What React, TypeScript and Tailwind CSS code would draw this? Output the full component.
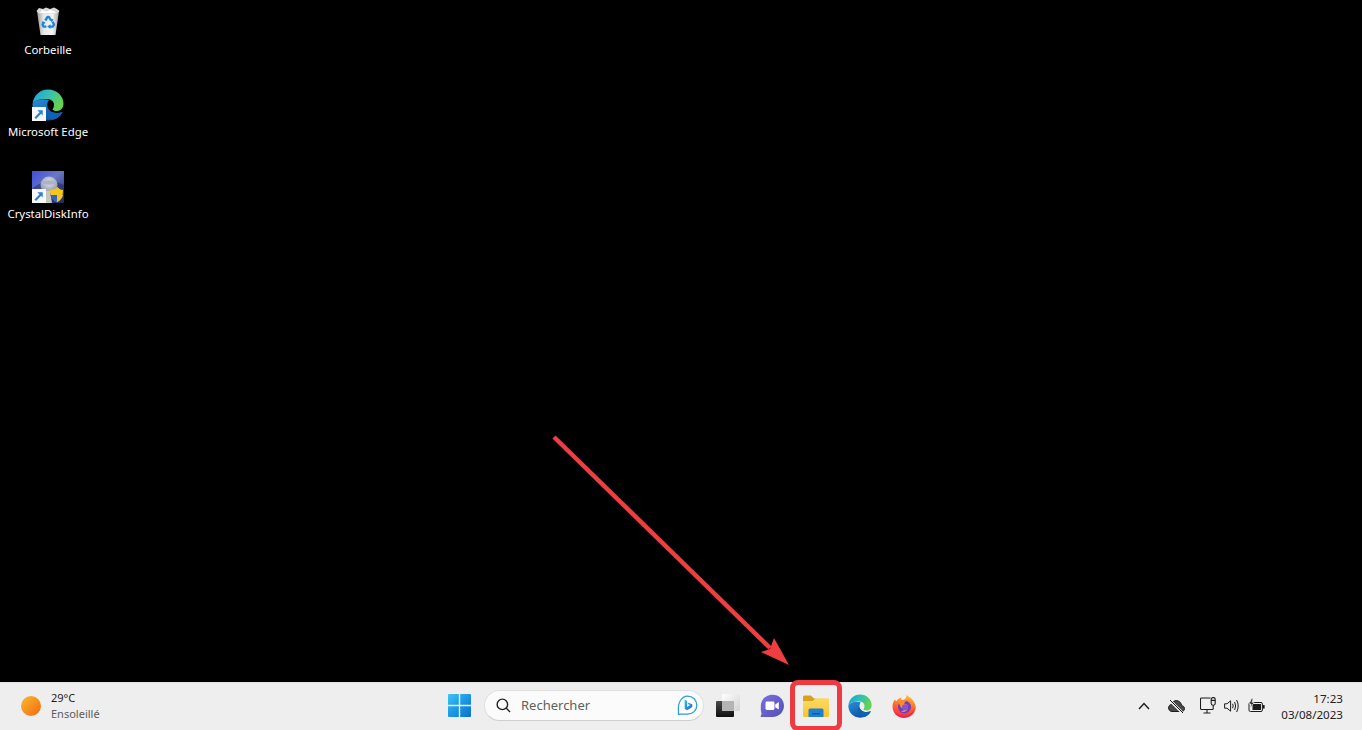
import React from "react";

function Shortcut() {
  return (
    <svg viewBox="0 0 13 13" className="absolute left-0 bottom-0 w-[14px] h-[14px]">
      <rect width="13" height="13" fill="#f8f8f8" />
      <path d="M3 10.5 L8.2 5.2" stroke="#2a7fd8" strokeWidth="2" fill="none" />
      <path d="M5 3 H10 V8 Z" fill="#2a7fd8" />
    </svg>
  );
}

function EdgeIcon({ size, id }: { size: number; id: string }) {
  return (
    <svg viewBox="0 0 32 32" width={size} height={size}>
      <defs>
        <linearGradient id={`${id}a`} x1="0" y1="0" x2="1" y2="0.4">
          <stop offset="0" stopColor="#1b9de2" />
          <stop offset="0.55" stopColor="#35c1b0" />
          <stop offset="1" stopColor="#66d24f" />
        </linearGradient>
        <linearGradient id={`${id}b`} x1="0" y1="0" x2="0.7" y2="1">
          <stop offset="0" stopColor="#2b8fd8" />
          <stop offset="1" stopColor="#0b4f9e" />
        </linearGradient>
      </defs>
      <path d="M0.5 15 C1.5 6 8 0.5 16 0.5 C25 0.5 31.5 7 31.5 15 C31.5 19.5 28 22 24.5 22 C22.5 22 21 21.2 20.5 20.4 C21.6 19 22 17.6 22 15.5 C22 12 18.5 10 14 10 C8 10 3 11 0.5 15 Z" fill={`url(#${id}a)`} />
      <path d="M0.5 15 C3 11 9 9 17 11 C15.5 12.5 15 15 15.5 18 C16.5 23 23 25.5 30.5 23 C28 28.5 22 31.5 16 31.5 C7 31.5 0 24 0.5 15 Z" fill={`url(#${id}b)`} />
      <path d="M15.5 18 C16.5 23 23 25.5 30.5 23 C28.5 27.5 24.5 30.2 21 30.5 C17 29.5 13 25 13.5 20 C13.7 18.5 14.5 17.5 15.5 18 Z" fill="#0f62b5" />
    </svg>
  );
}

function RecycleBin() {
  return (
    <svg viewBox="0 0 24 29" className="w-[24px] h-[29px] mb-[3px]">
      <defs>
        <linearGradient id="bin" x1="0" y1="0" x2="1" y2="0">
          <stop offset="0" stopColor="#9a9a9a" />
          <stop offset="0.3" stopColor="#e8e8e8" />
          <stop offset="0.7" stopColor="#f4f4f4" />
          <stop offset="1" stopColor="#a4a4a4" />
        </linearGradient>
      </defs>
      <path d="M1 4 L23 4 L19.5 28 L4.5 28 Z" fill="url(#bin)" />
      <path d="M0.5 4 L3 1 L7 2 L10 0.5 L14 2 L18 0.5 L21 2 L23.5 4 L21 6.5 L3 6.5 Z" fill="#d8d8d8" />
      <path d="M4 6 L6 3 L10 4.5 L14 3 L18 4 L20 6 Z" fill="#ffffff" />
      <g fill="none" stroke="#1d86e0" strokeWidth="2.4" strokeLinejoin="round">
        <path d="M9.3 13.5 L11.5 10 H13 L15 13.3" />
        <path d="M16.6 14.8 L18 17.8 L16.8 19.6 H13.8" />
        <path d="M10.4 19.6 H7.6 L6.6 17.6 L8 15" />
      </g>
      <path d="M13.5 12.3 L17.5 12 L16 15.5 Z M14.5 17.2 V22 L11.2 19.6 Z M5.8 14.2 L9.6 15.6 L6.6 17.8 Z" fill="#1d86e0" />
    </svg>
  );
}

function CrystalIcon() {
  return (
    <svg viewBox="0 0 32 32" className="w-[32px] h-[32px]">
      <defs>
        <linearGradient id="cbg" x1="0" y1="0" x2="1" y2="1">
          <stop offset="0" stopColor="#3f4fd8" />
          <stop offset="0.45" stopColor="#6a78c8" />
          <stop offset="1" stopColor="#1d2a6a" />
        </linearGradient>
        <radialGradient id="csph" cx="0.5" cy="0.35" r="0.7">
          <stop offset="0" stopColor="#e4e6ee" />
          <stop offset="1" stopColor="#7f88a4" />
        </radialGradient>
      </defs>
      <rect width="32" height="32" fill="url(#cbg)" />
      <path d="M0 18 C8 10 20 8 32 14 V32 H0 Z" fill="#1e2a5e" opacity="0.55" />
      <circle cx="17" cy="14" r="8.5" fill="url(#csph)" />
      <ellipse cx="17" cy="11.5" rx="6.5" ry="2.2" fill="#aeb3c4" />
      <path d="M8 24 C8 20 13 19 18 20 L20 32 H8 Z" fill="#c9c6c0" />
      <path d="M18 19 C21 19 24 18 25.5 16 C27 18 29 19 31 19 C31 25 29 29 25 31 C21 29 18 25 18 19 Z" fill="#f6c61a" />
      <path d="M25 17 V24 H18.5 C19 27 21.5 29.6 25 31 Z" fill="#2a66c8" />
      <path d="M25 24 H31 C30.4 27 28.5 29.6 25 31 Z" fill="#f6c61a" />
    </svg>
  );
}

function DesktopIcon({ label, children }: { label: string; children: React.ReactNode }) {
  return (
    <div className="w-[96px] h-[82px] flex flex-col items-center">
      <div className="relative w-[32px] h-[36px] flex items-end justify-center">{children}</div>
      <div className="mt-[3px] text-[11.4px] leading-[16px] text-white whitespace-nowrap">{label}</div>
    </div>
  );
}

function WindowsLogo() {
  return (
    <svg viewBox="0 0 23 23" className="w-[23px] h-[23px]">
      <defs>
        <linearGradient id="win" gradientUnits="userSpaceOnUse" x1="0" y1="0" x2="23" y2="23">
          <stop offset="0" stopColor="#3fc3f7" />
          <stop offset="0.5" stopColor="#1a98e6" />
          <stop offset="1" stopColor="#0b6fc9" />
        </linearGradient>
      </defs>
      <path d="M1 0 H10.8 V10.8 H0 V1 Q0 0 1 0 Z M12.2 0 H22 Q23 0 23 1 V10.8 H12.2 Z M0 12.2 H10.8 V23 H1 Q0 23 0 22 Z M12.2 12.2 H23 V22 Q23 23 22 23 H12.2 Z" fill="url(#win)" />
    </svg>
  );
}

function BingIcon() {
  return (
    <svg viewBox="0 0 22 22" className="w-[21px] h-[21px]">
      <defs>
        <linearGradient id="bing" x1="0" y1="0" x2="1" y2="1">
          <stop offset="0" stopColor="#30c4e8" />
          <stop offset="1" stopColor="#1a5fd8" />
        </linearGradient>
      </defs>
      <path d="M11 1.2 C16.5 1.2 20.8 5.4 20.8 10.8 C20.8 16.2 16.5 20 11 20 H3.2 C2 20 1.6 21 1.4 20 C1.8 18.5 1.6 17.5 1.4 15.5 C0.6 10 4 1.2 11 1.2 Z" fill="#fff" stroke="#2a9ce0" strokeWidth="1.3" />
      <path d="M8 5 L10.6 6 V12.6 L14 10.6 L11.8 9.6 L11 7.8 L16 9.6 V12.6 L10.6 16 L8 14.4 Z" fill="url(#bing)" />
    </svg>
  );
}

function TaskView() {
  return (
    <svg viewBox="0 0 24 23" className="w-[24px] h-[23px]">
      <defs>
        <linearGradient id="tvd" x1="0" y1="0" x2="0" y2="1">
          <stop offset="0" stopColor="#4a4a4a" />
          <stop offset="1" stopColor="#0f0f0f" />
        </linearGradient>
        <linearGradient id="tvl" x1="0" y1="0" x2="1" y2="1">
          <stop offset="0" stopColor="#ffffff" />
          <stop offset="1" stopColor="#d2d2d2" />
        </linearGradient>
      </defs>
      <rect x="0" y="7" width="18" height="16" rx="1" fill="url(#tvd)" />
      <rect x="6" y="0" width="18" height="17" rx="1" fill="url(#tvl)" />
      <rect x="6" y="7" width="12" height="10" fill="#b4b4b4" />
    </svg>
  );
}

function TeamsIcon() {
  return (
    <svg viewBox="0 0 24 24" className="w-[24px] h-[24px]">
      <defs>
        <linearGradient id="tm" x1="0" y1="0" x2="1" y2="1">
          <stop offset="0" stopColor="#7b6fe0" />
          <stop offset="1" stopColor="#4f52b2" />
        </linearGradient>
      </defs>
      <path d="M12.5 0.8 C19 0.8 24 5.6 24 11.8 C24 18 19 23 12.5 23 H1.2 C0.4 23 0.4 22.4 0.8 21.8 C1.6 20.6 1.6 19.6 1.2 18 C0.6 16 0.8 14 0.8 11.8 C0.8 5.6 6 0.8 12.5 0.8 Z" fill="url(#tm)" />
      <rect x="5.5" y="7.5" width="9" height="8.5" rx="1.4" fill="#fff" />
      <path d="M15.2 10.4 L18.8 8 V15.5 L15.2 13.2 Z" fill="#fff" />
    </svg>
  );
}

function FolderIcon() {
  return (
    <svg viewBox="0 0 26 22" className="w-[26px] h-[22px]">
      <defs>
        <linearGradient id="fd" x1="0" y1="0" x2="0" y2="1">
          <stop offset="0" stopColor="#fcd964" />
          <stop offset="1" stopColor="#f9c52f" />
        </linearGradient>
      </defs>
      <path d="M0 2 Q0 0.5 1.5 0.5 H8 L11 3.5 H13 L10 6 H0 Z" fill="#d9a21e" />
      <path d="M0 6 H10 L13 3.3 H24.5 Q26 3.3 26 4.8 V20.5 Q26 22 24.5 22 H1.5 Q0 22 0 20.5 Z" fill="url(#fd)" />
      <path d="M5.5 15 Q5.5 13.5 7 13.5 H19 Q20.5 13.5 20.5 15 V22 H5.5 Z" fill="#1f7fd0" />
      <rect x="9" y="18" width="8" height="1.4" fill="#0f5aa8" />
    </svg>
  );
}

function FirefoxIcon() {
  return (
    <svg viewBox="0 0 24 24" className="w-[24px] h-[24px]">
      <defs>
        <linearGradient id="ff" x1="0.6" y1="0" x2="0.4" y2="1">
          <stop offset="0" stopColor="#ffc02e" />
          <stop offset="0.5" stopColor="#ff6b2b" />
          <stop offset="1" stopColor="#f2264f" />
        </linearGradient>
      </defs>
      <path d="M14.5 0.5 C15.5 2.5 19 3.5 21 6.5 C23.5 10 24 13 23.5 15 C22.5 20.5 17.5 24 12 24 C5.5 24 0.5 19 0.5 12.5 C0.5 9.5 1.5 7 3 5.5 C3.5 6.5 4 7 4.5 7.3 C5.5 5 7.5 3.8 9.5 3.5 C8.8 4.5 9 5.5 9.5 6 C12 6.5 15 4 14.5 0.5 Z" fill="url(#ff)" />
      <circle cx="12.5" cy="13" r="6.5" fill="#6b3fc4" />
      <path d="M7 8 C9 6 13 5.5 15 7 C13 7.5 12 8.5 12.5 10 C15 10 16.5 11.5 16 14 C15.5 17 12 19 9 17.5 C11 17.2 12.5 16 12.5 14.5 C10 15 7.5 13 7 8 Z" fill="#ff8a2b" />
      <circle cx="13" cy="13.2" r="3" fill="#8a4fd8" />
      <path d="M2 16 C4 20.5 9 22.5 13 22 C18 21.5 21.5 18 22.5 13.5 C22.5 19 18 23.3 12 23.3 C7.5 23.3 3.5 20.5 2 16 Z" fill="#e8214d" />
    </svg>
  );
}

function TaskIcon({ children }: { children: React.ReactNode }) {
  return <div className="relative w-[44px] h-[44px] flex items-center justify-center shrink-0">{children}</div>;
}

function Tray() {
  return (
    <div className="flex items-center ml-auto">
      <svg viewBox="0 0 12 8" className="w-[12px] h-[8px]" fill="none" stroke="#1c1c1c" strokeWidth="1.4">
        <path d="M1 7 L6 1.5 L11 7" />
      </svg>
      <svg viewBox="0 0 17 14" className="w-[17px] h-[14px] ml-[18px]">
        <path d="M4 12.5 H13.5 C15.5 12.5 16.5 11.2 16.5 9.6 C16.5 8 15.4 6.8 13.8 6.7 C13.2 3.8 11 1.6 8.4 1.6 C6.2 1.6 4.4 3 3.7 5.2 C1.8 5.5 0.6 7 0.6 8.9 C0.6 11 2.1 12.5 4 12.5 Z" fill="#4a4a4a" stroke="#1c1c1c" strokeWidth="1" />
        <path d="M2.5 2 L14 13.5" stroke="#eeeeee" strokeWidth="2.6" />
        <path d="M2 1 L15 14" stroke="#1c1c1c" strokeWidth="1" />
      </svg>
      <svg viewBox="0 0 16 17" className="w-[16px] h-[17px] ml-[15px]" fill="none" stroke="#1c1c1c" strokeWidth="1.1">
        <path d="M10.5 1 H1.5 Q0.5 1 0.5 2 V11.5 Q0.5 12.5 1.5 12.5 H13" />
        <path d="M3.5 16 H10.5 M7 12.5 V16" />
        <rect x="11.2" y="0.6" width="4" height="7.6" rx="1.6" />
        <path d="M11.2 3.4 H15.2 M13.2 8.2 V12.5" />
      </svg>
      <svg viewBox="0 0 16 14" className="w-[16px] h-[14px] ml-[8px]" fill="none" stroke="#1c1c1c" strokeWidth="1">
        <path d="M0.6 4.8 H3 L6.6 1.8 V12.2 L3 9.2 H0.6 Z" strokeLinejoin="round" />
        <path d="M8.6 4.8 Q9.8 7 8.6 9.2 M10.6 3 Q12.7 7 10.6 11 M12.6 1 Q15.8 7 12.6 13" />
      </svg>
      <svg viewBox="0 0 17 15" className="w-[17px] h-[15px] ml-[8px]">
        <rect x="1" y="4.5" width="13.4" height="9" rx="1.4" fill="none" stroke="#1c1c1c" strokeWidth="1" />
        <rect x="4.5" y="6" width="8.5" height="6" fill="#1c1c1c" />
        <path d="M3.6 0.4 L1.2 6 H3.2 L2.2 10 L6 4.4 H3.9 L5 0.4 Z" fill="#1c1c1c" stroke="#eeeeee" strokeWidth="0.6" />
        <rect x="14.8" y="7" width="1.8" height="3.6" fill="#1c1c1c" />
      </svg>
      <div className="ml-[14px] mr-[19px] mt-[2px] w-[64px] flex flex-col items-end text-[11.6px] leading-[16px] text-[#222222]">
        <span>17:23</span>
        <span>03/08/2023</span>
      </div>
    </div>
  );
}

export default function App() {
  return (
    <div className="relative w-[1362px] h-[730px] overflow-hidden bg-black flex flex-col font-['Noto_Sans','Open_Sans',sans-serif]">
      <div className="flex-1 pt-[3px]">
        <div className="flex flex-col">
          <DesktopIcon label="Corbeille"><RecycleBin /></DesktopIcon>
          <DesktopIcon label="Microsoft Edge">
            <EdgeIcon size={32} id="d" />
            <Shortcut />
          </DesktopIcon>
          <DesktopIcon label="CrystalDiskInfo">
            <CrystalIcon />
            <Shortcut />
          </DesktopIcon>
        </div>
      </div>

      <div className="h-[48px] pb-[2px] bg-[#eeeeee] border-t border-[#e2e2e2] flex items-center shrink-0">
        <div className="w-[437px] flex items-center pl-[21px] shrink-0">
          <div className="w-[20px] h-[20px] rounded-full bg-gradient-to-br from-[#f8b930] to-[#f2650c]" />
          <div className="ml-[10px] flex flex-col text-[11px] leading-[16px]">
            <span className="text-[#1c1c1c]">29°C</span>
            <span className="text-[#5c5c5c]">Ensoleillé</span>
          </div>
        </div>
        <TaskIcon><WindowsLogo /></TaskIcon>
        <div className="ml-[3px] w-[220px] h-[31px] shrink-0 rounded-full bg-[#fbfbfb] border border-[#e0e0e0] border-b-[#cfcfcf] flex items-center pl-[11px] pr-[5px]">
          <svg viewBox="0 0 16 16" className="w-[15px] h-[15px]" fill="none" stroke="#222222" strokeWidth="1.5">
            <circle cx="6.8" cy="6.8" r="5.6" />
            <path d="M11 11 L15 15" />
          </svg>
          <span className="ml-[10px] mt-[1px] text-[13px] text-[#5f5f5f]">Rechercher</span>
          <div className="ml-auto flex items-center"><BingIcon /></div>
        </div>
        <div className="ml-[2px] flex">
          <TaskIcon><TaskView /></TaskIcon>
          <TaskIcon><TeamsIcon /></TaskIcon>
          <TaskIcon>
            <FolderIcon />
            <div className="absolute left-[-4px] top-[-4px] w-[52px] h-[51px] border-[5px] border-[#ee3a42] rounded-[8px]" />
          </TaskIcon>
          <TaskIcon><EdgeIcon size={24} id="t" /></TaskIcon>
          <TaskIcon><FirefoxIcon /></TaskIcon>
        </div>
        <Tray />
      </div>

      <svg viewBox="0 0 1362 730" className="absolute inset-0 w-[1362px] h-[730px] pointer-events-none">
        <path d="M554 437 L770 648" stroke="#ef3e42" strokeWidth="4.5" fill="none" />
        <path d="M789 665 L761 652 L770 649 L774 638 Z" fill="#ef3e42" />
      </svg>
    </div>
  );
}
